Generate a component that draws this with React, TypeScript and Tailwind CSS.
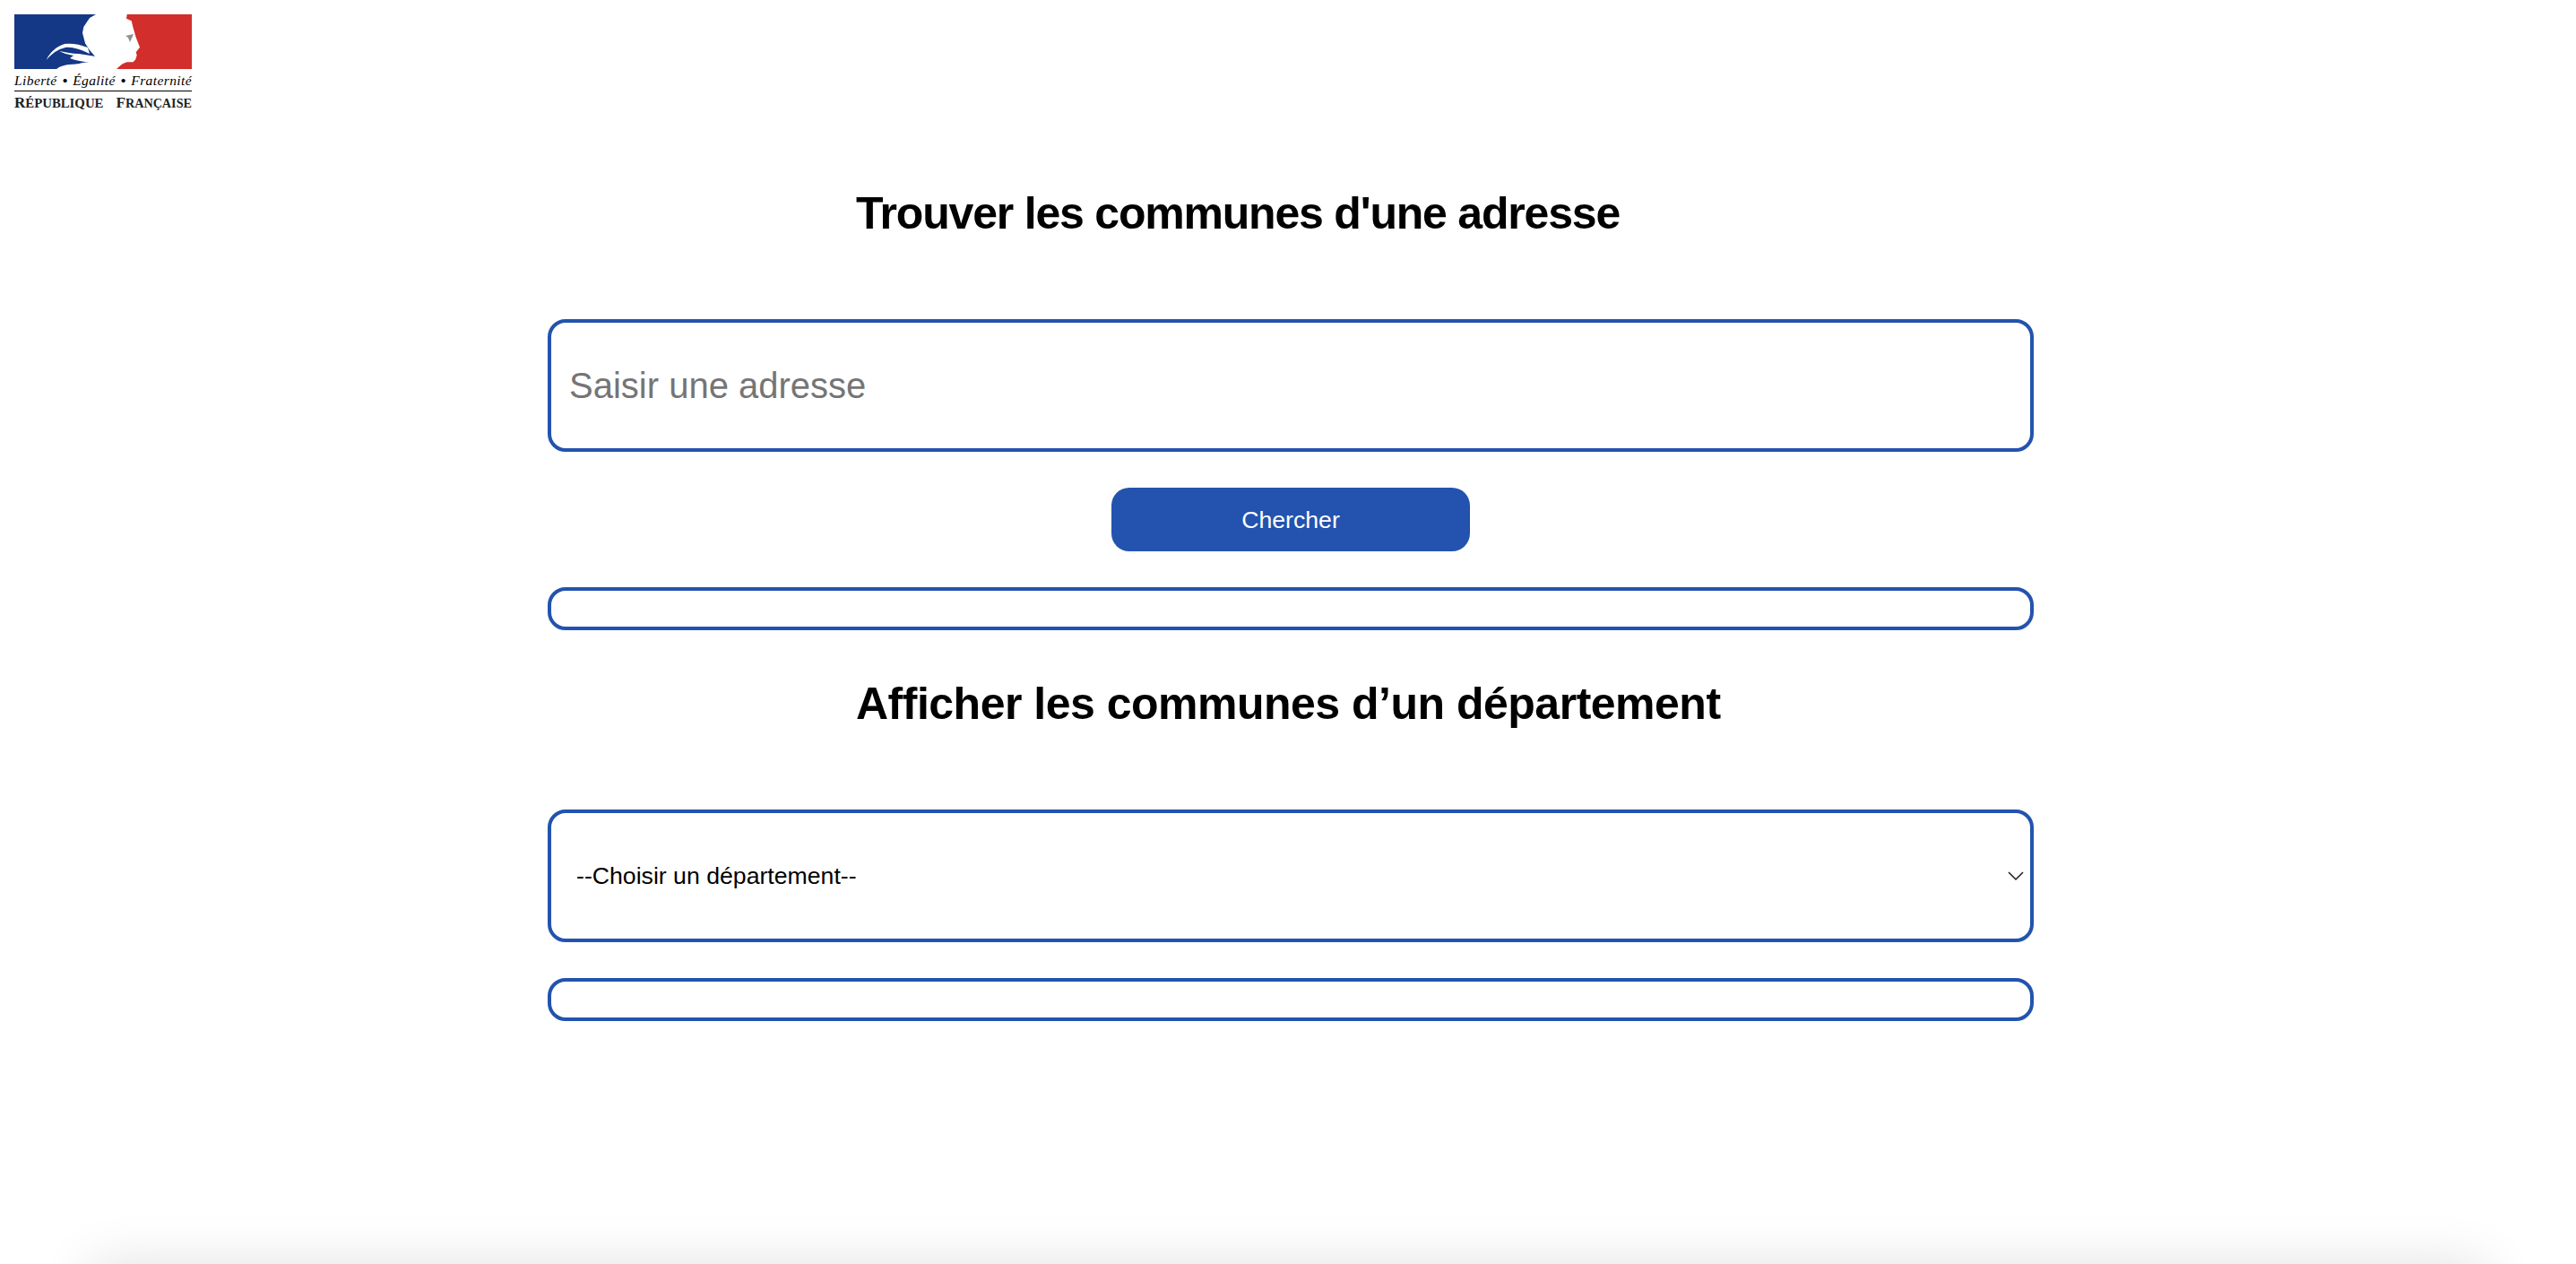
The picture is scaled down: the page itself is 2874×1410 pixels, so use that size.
const Marianne = () => (
  <svg viewBox="0 0 198 61" className="block h-[61px] w-[198px]">
    <rect width="198" height="61" fill="#fff" />
    <rect width="91" height="61" fill="#143786" />
    <path
      d="M125.7 0 L198 0 L198 61 L114 61 C118 57 122 54 125.7 53.3 L132.3 53.3 L135 50.7 L136.7 45.7 L135.7 42.3 L140 36.7 L135.7 25.7 L132.3 14 L130.7 7.3 L125 4.7 Z"
      fill="#d22e2b"
    />
    <path d="M91 0 L84 4 L77.3 14 L76 20.7 L79 32.3 L84 40 L91 48 Z" fill="#fff" />
    <path d="M35.7 50.7 C40 42 47 36 56 33 C64 32 72 33 82 37 L84 44 C74 39 64 36 57 37 C48 39 42 44 35.7 50.7 Z" fill="#fff" />
    <path d="M50 41 C58 42 64 44 72 44 L91 47 L91 53 C80 54 70 52 62 49 L66 46 C60 45 54 43 50 41 Z" fill="#fff" />
    <path d="M47 61 C56 54 66 57 76 54 L91 52 L91 61 Z" fill="#fff" />
    <path d="M124 24 L133 22 L129 31 L127 26 Z" fill="#8f8f8f" />
  </svg>
);

const Logo = () => (
  <div className="flex w-[198px] flex-col">
    <Marianne />
    <p className="mt-[3px] flex h-[19px] items-center justify-between font-['Liberation_Serif',serif] text-[15.5px] leading-none text-black italic">
      <span className="tracking-[0.4px]">Liberté</span>
      <span className="font-bold">•</span>
      <span className="tracking-[0.4px]">Égalité</span>
      <span className="font-bold">•</span>
      <span className="tracking-[0.4px]">Fraternité</span>
    </p>
    <div className="mt-[2px] h-[1px] bg-black" />
    <p className="mt-[5px] flex h-[15px] items-baseline justify-between font-['Liberation_Serif',serif] text-[17px] leading-[15px] font-bold whitespace-nowrap text-[#222]">
      <span>
        R<span className="text-[14.8px]">ÉPUBLIQUE</span>
      </span>
      <span>
        F<span className="text-[14.2px]">RANÇAISE</span>
      </span>
    </p>
  </div>
);

const Box = ({ className = "" }: { className?: string }) => (
  <div className={`w-full rounded-[20px] border-4 border-[#2353ae] ${className}`} />
);

export default function App() {
  return (
    <div className="flex h-[1410px] flex-col overflow-hidden bg-white font-['Liberation_Sans',sans-serif] text-black">
      <header className="px-4 pt-4">
        <Logo />
      </header>
      <main className="mt-[87px] ml-[611px] flex w-[1658px] flex-col">
        <h1 className="ml-[344px] text-[50px] leading-[58px] font-bold tracking-[-1.2px] whitespace-nowrap">
          Trouver les communes d'une adresse
        </h1>
        <input
          placeholder="Saisir une adresse"
          className="mt-[89px] h-[148px] w-full rounded-[20px] border-4 border-[#2353ae] px-[20px] text-[40px] outline-none placeholder:text-[#757575]"
        />
        <button className="mx-auto mt-[40px] h-[71px] w-[400px] rounded-[20px] bg-[#2353ae] text-[26.67px] text-white">
          Chercher
        </button>
        <Box className="mt-[40px] h-[48px]" />
        <h1 className="mt-[53px] ml-[344px] text-[50px] leading-[58px] font-bold tracking-[-0.5px] whitespace-nowrap">
          Afficher les communes d’un département
        </h1>
        <div className="relative mt-[89px]">
          <select className="h-[148px] w-full appearance-none rounded-[20px] border-4 border-[#2353ae] bg-white pl-[28px] text-[26.67px] outline-none">
            <option>--Choisir un département--</option>
          </select>
          <svg viewBox="0 0 18 11" className="absolute top-[69px] right-[11px] h-[11px] w-[18px]" fill="none" stroke="#1a1a1a" strokeWidth="1.5">
            <path d="M1 1 L9 9 L17 1" />
          </svg>
        </div>
        <Box className="mt-[40px] h-[48px]" />
      </main>
      <footer className="mx-[100px] mt-auto mb-[-100px] h-[100px] shrink-0 shadow-[0_0_60px_0_rgba(0,0,0,0.12)]" />
    </div>
  );
}
